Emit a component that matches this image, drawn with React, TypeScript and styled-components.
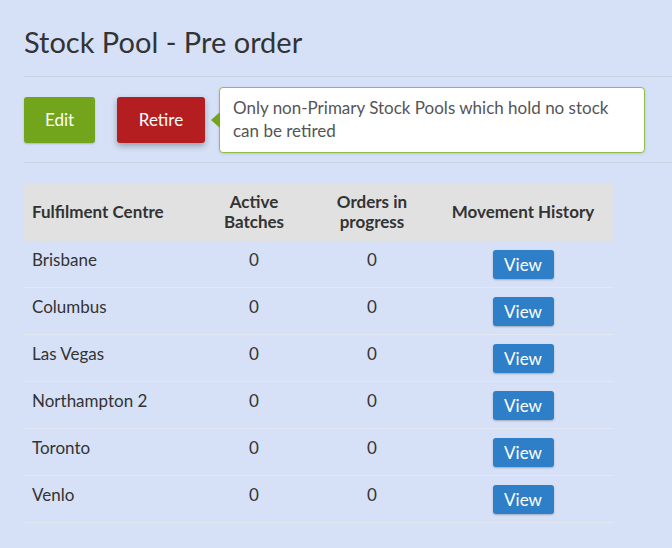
import React from "react";
import styled, { createGlobalStyle } from "styled-components";

const Global = createGlobalStyle`
  html, body { margin: 0; padding: 0; background: #d6e1f7; }
  body { font-family: Lato, "Open Sans", sans-serif; color: #333; }
`;

const Page = styled.div`
  padding: 0 0 0 24px;
  min-height: 548px;
  box-sizing: border-box;
`;

const Title = styled.h1`
  margin: 0;
  padding-top: 24px;
  font-size: 29px;
  font-weight: 400;
  line-height: 36px;
  color: #333;
  height: 52px;
`;

const Rule = styled.hr`
  margin: 0;
  border: 0;
  border-top: 1px solid #c9d2e3;
`;

const Actions = styled.div`
  display: flex;
  align-items: center;
  height: 85px;
  gap: 22px;
`;

const ActionButton = styled.button<{ $tone: "green" | "red" }>`
  height: 46px;
  padding: 0 20px;
  border: 0;
  border-radius: 3px;
  font-family: Lato, sans-serif;
  font-size: 17px;
  color: #fff;
  background: ${(p) => (p.$tone === "green" ? "#72a51b" : "#b51e20")};
  box-shadow: ${(p) =>
    p.$tone === "green"
      ? "0 1px 2px rgba(0,0,0,0.2)"
      : "0 3px 6px rgba(0,0,0,0.3)"};
  cursor: pointer;
`;

const EditButton = styled(ActionButton)`
  width: 71px;
`;

const RetireButton = styled(ActionButton)`
  width: 88px;
`;

const TooltipBox = styled.div`
  position: relative;
  margin-left: -8px;
  width: 426px;
  box-sizing: border-box;
  padding: 8px 13px 10px 13px;
  background: #fff;
  border: 1px solid #8cc04b;
  border-radius: 4px;
  box-shadow: 0 1px 3px rgba(0,0,0,0.12);
  font-size: 17px;
  line-height: 23px;
  color: #555;
  &::before {
    content: "";
    position: absolute;
    left: -9px;
    top: 50%;
    margin-top: -8px;
    border-style: solid;
    border-width: 8px 9px 8px 0;
    border-color: transparent #72a51b transparent transparent;
  }
`;

const TableWrap = styled.div`
  padding-top: 20px;
`;

const Table = styled.table`
  width: 590px;
  border-collapse: collapse;
  font-size: 17px;
  table-layout: fixed;
`;

const HeadCell = styled.th<{ $align?: "left" | "center"; $w: number }>`
  width: ${(p) => p.$w}px;
  background: #e1e1e1;
  font-weight: 700;
  line-height: 20px;
  padding: 9px 8px;
  height: 58px;
  box-sizing: border-box;
  text-align: ${(p) => p.$align ?? "center"};
  vertical-align: middle;
  color: #333;
`;

const Cell = styled.td<{ $align?: "left" | "center" }>`
  padding: 8px;
  line-height: 22px;
  height: 30px;
  vertical-align: top;
  text-align: ${(p) => p.$align ?? "center"};
  border-bottom: 1px solid #e2e8f2;
  color: #333;
`;

const ViewButton = styled.button`
  width: 61px;
  height: 29px;
  margin-top: 1px;
  padding: 0;
  border: 0;
  border-radius: 3px;
  background: #2e7fc7;
  color: #fff;
  font-family: Lato, sans-serif;
  font-size: 17px;
  box-shadow: 0 1px 2px rgba(0,0,0,0.25);
  cursor: pointer;
`;

const centres = ["Brisbane", "Columbus", "Las Vegas", "Northampton 2", "Toronto", "Venlo"];

export default function App() {
  return (
    <>
      <Global />
      <Page>
        <Title>Stock Pool - Pre order</Title>
        <Rule />
        <Actions>
          <EditButton $tone="green">Edit</EditButton>
          <RetireButton $tone="red">Retire</RetireButton>
          <TooltipBox>
            Only non-Primary Stock Pools which hold no stock
            <br />
            can be retired
          </TooltipBox>
        </Actions>
        <Rule />
        <TableWrap>
          <Table>
            <thead>
              <tr>
                <HeadCell $align="left" $w={172}>Fulfilment Centre</HeadCell>
                <HeadCell $w={116}>Active<br />Batches</HeadCell>
                <HeadCell $w={120}>Orders in<br />progress</HeadCell>
                <HeadCell $w={182}>Movement History</HeadCell>
              </tr>
            </thead>
            <tbody>
              {centres.map((c) => (
                <tr key={c}>
                  <Cell $align="left">{c}</Cell>
                  <Cell>0</Cell>
                  <Cell>0</Cell>
                  <Cell>
                    <ViewButton>View</ViewButton>
                  </Cell>
                </tr>
              ))}
            </tbody>
          </Table>
        </TableWrap>
      </Page>
    </>
  );
}
